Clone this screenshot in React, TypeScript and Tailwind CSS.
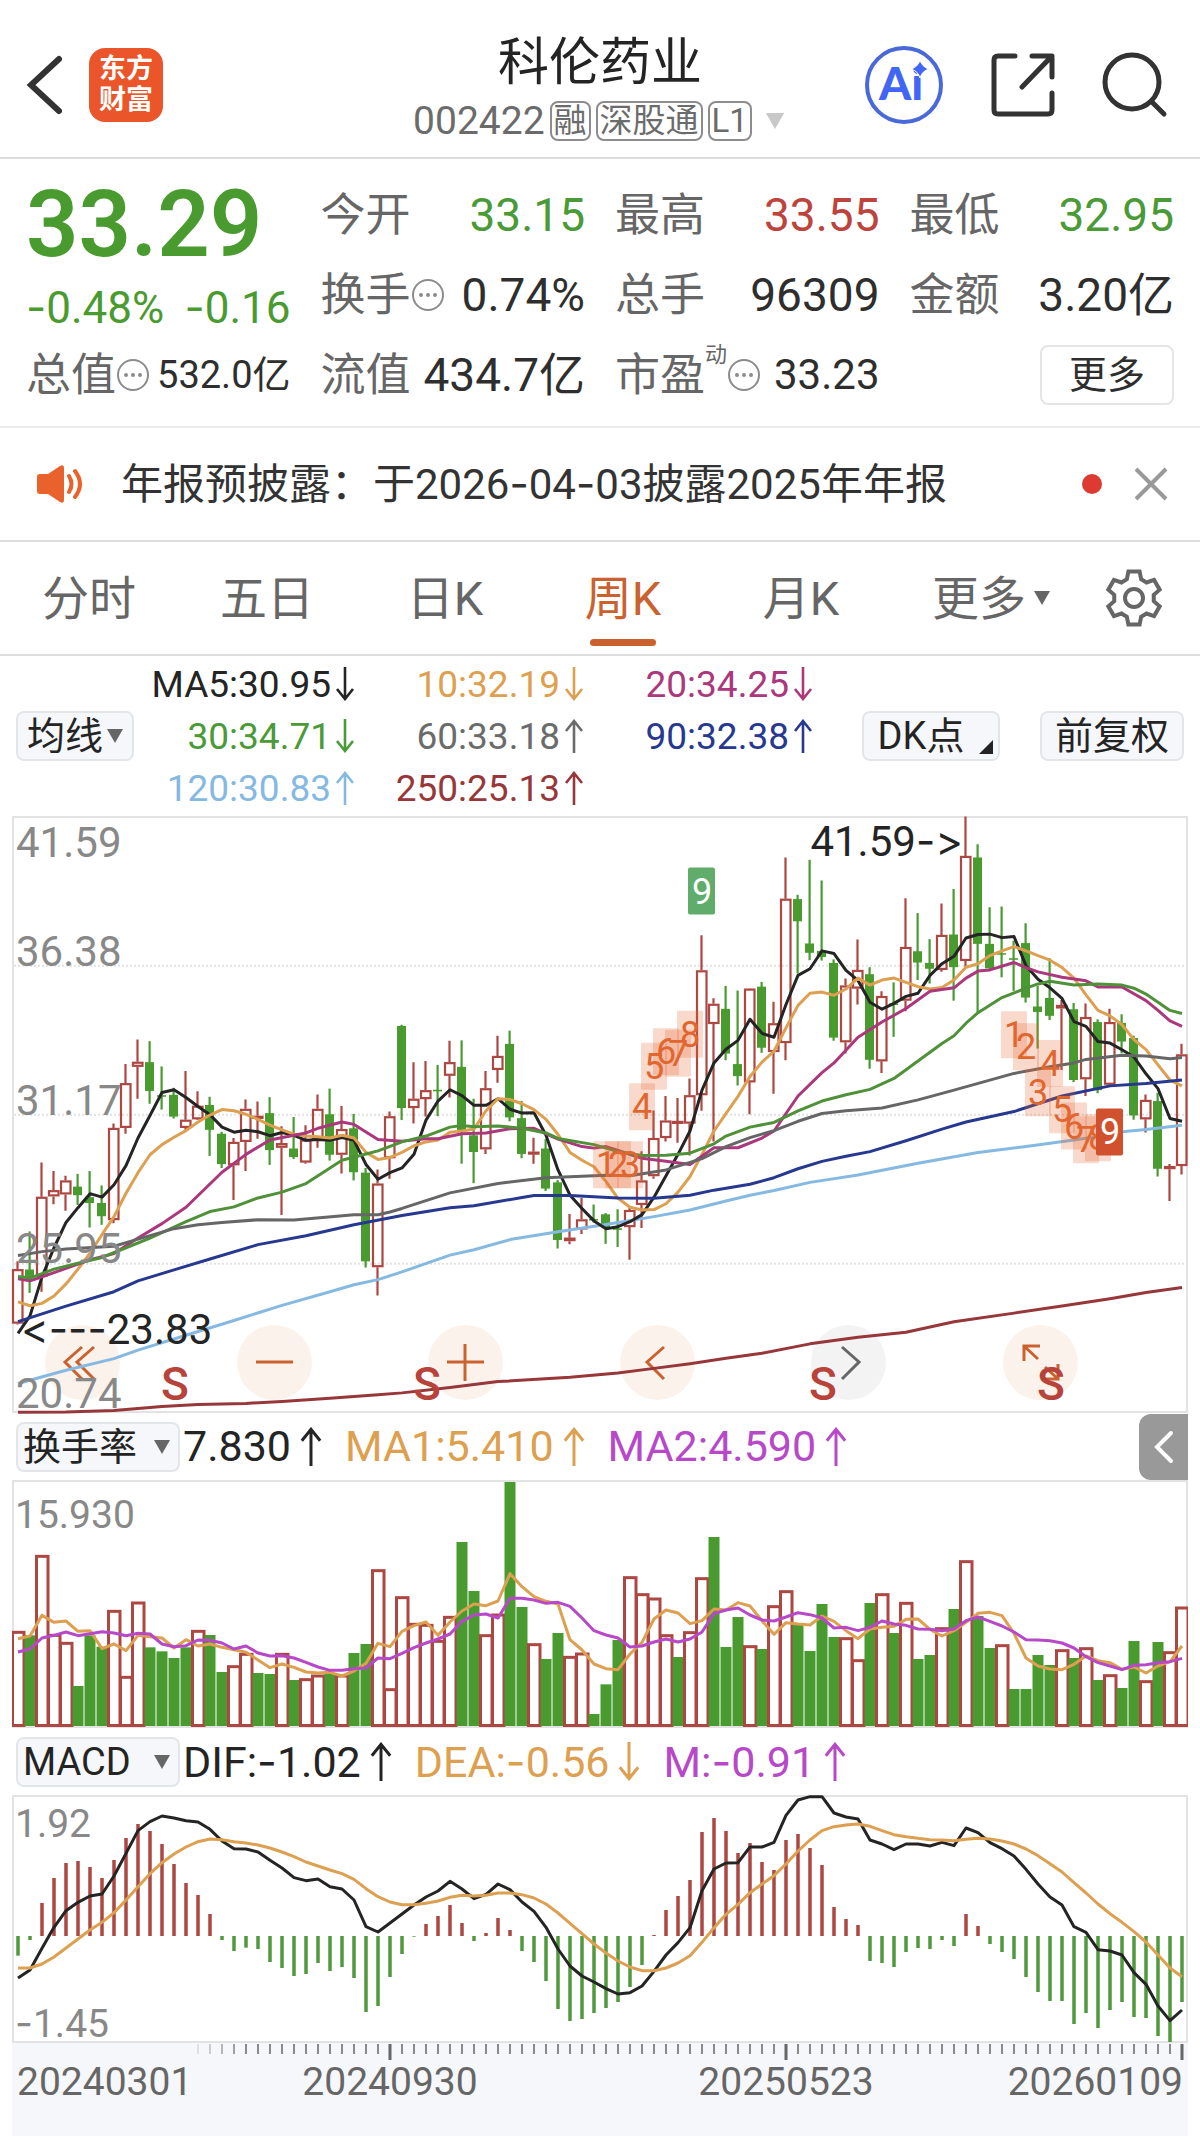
import type { ReactNode } from "react";

type Candle = [dir: "r" | "g", high: number, top: number, bottom: number, low: number];
type Point = [index: number, value: number];

const RED = "#ad4742";
const GREEN = "#499b30";
const AMBER = "#dd9f50";
const PURPLE = "#b748c8";
const INK = "#242424";

// one slot per week, 12 units wide
const slotX = (i: number) => 6 + i * 12;
const priceY = (v: number) => v / 2.57 - 6;
const volumeY = (v: number) => v / 3 - 80;
const macdY = (v: number) => v / 3 - 25;

const CANDLES: Candle[] = [
  ["r", 1160, 1180, 1320, 1322], ["g", 1083, 1181, 1203, 1241], ["r", 906, 994, 1200, 1238],
  ["r", 928, 977, 993, 1013], ["r", 940, 952, 988, 1030], ["g", 935, 968, 990, 1015],
  ["g", 928, 995, 1010, 1073], ["g", 965, 1010, 1044, 1066], ["r", 806, 817, 1054, 1062],
  ["r", 653, 702, 817, 832], ["r", 590, 647, 660, 742], ["g", 594, 648, 722, 755],
  ["g", 659, 733, 737, 770], ["g", 714, 732, 788, 793], ["r", 671, 796, 817, 822],
  ["r", 723, 760, 795, 797], ["g", 737, 758, 822, 889], ["g", 827, 832, 910, 920],
  ["r", 843, 853, 913, 1002], ["r", 744, 768, 853, 928], ["r", 749, 786, 790, 845],
  ["g", 738, 779, 874, 912], ["r", 813, 856, 868, 1041], ["g", 789, 870, 892, 897],
  ["r", 810, 847, 906, 909], ["r", 731, 768, 847, 868], ["g", 716, 782, 886, 901],
  ["r", 761, 820, 886, 934], ["g", 781, 818, 931, 952], ["g", 920, 932, 1160, 1176],
  ["r", 924, 960, 1175, 1248], ["r", 775, 787, 895, 948], ["g", 552, 555, 766, 797],
  ["r", 648, 742, 766, 806], ["r", 645, 720, 743, 788], ["g", 655, 719, 723, 787],
  ["r", 593, 648, 683, 739], ["g", 592, 660, 823, 909], ["g", 742, 836, 879, 959],
  ["r", 671, 715, 872, 884], ["r", 580, 632, 668, 701], ["g", 567, 601, 790, 800],
  ["g", 748, 792, 884, 895], ["r", 842, 878, 885, 909], ["g", 846, 870, 973, 979],
  ["g", 951, 957, 1105, 1127], ["r", 1038, 1099, 1108, 1116], ["r", 997, 1052, 1078, 1090],
  ["g", 1014, 1051, 1055, 1060], ["g", 1036, 1039, 1072, 1115], ["g", 1026, 1075, 1079, 1123],
  ["r", 1020, 1028, 1072, 1156], ["r", 877, 952, 1015, 1074], ["r", 772, 843, 941, 948],
  ["r", 735, 798, 843, 852], ["r", 740, 799, 804, 855], ["r", 690, 733, 806, 888],
  ["r", 322, 412, 733, 773], ["r", 484, 498, 550, 852], ["g", 452, 511, 626, 643],
  ["g", 464, 653, 684, 708], ["r", 458, 459, 700, 782], ["g", 442, 454, 611, 624],
  ["r", 493, 548, 622, 729], ["r", 122, 228, 599, 643], ["g", 218, 229, 286, 420],
  ["g", 128, 343, 367, 386], ["g", 181, 362, 378, 387], ["g", 384, 393, 585, 593],
  ["r", 433, 451, 597, 626], ["r", 333, 411, 459, 500], ["g", 404, 422, 642, 665],
  ["r", 466, 478, 646, 676], ["g", 443, 497, 501, 583], ["r", 227, 352, 490, 517],
  ["g", 265, 363, 392, 437], ["g", 332, 393, 408, 446], ["r", 240, 321, 411, 416],
  ["g", 203, 320, 404, 490], ["r", 17, 118, 388, 405], ["g", 88, 122, 344, 520],
  ["g", 250, 344, 407, 412], ["g", 248, 368, 371, 430], ["g", 336, 381, 385, 465],
  ["g", 291, 342, 482, 495], ["g", 452, 505, 519, 613], ["g", 381, 483, 529, 540],
  ["r", 488, 501, 510, 668], ["g", 496, 512, 694, 699], ["r", 497, 532, 692, 735],
  ["g", 538, 545, 720, 728], ["r", 511, 545, 706, 710], ["g", 525, 547, 595, 625],
  ["g", 580, 586, 785, 796], ["r", 731, 745, 795, 829], ["g", 727, 748, 922, 942],
  ["r", 910, 915, 923, 1005], ["r", 601, 628, 915, 937],
];

const MA5 = [
  1345, 1300, 1200, 1125, 1060, 1022, 986, 995, 963, 914, 843, 785, 726, 719, 739, 762, 783, 815, 828, 823,
  827, 837, 829, 836, 849, 847, 849, 842, 849, 911, 949, 932, 920, 885, 797, 748, 719, 734, 759, 759, 742,
  769, 779, 778, 836, 925, 990, 1024, 1056, 1076, 1071, 1058, 1040, 995, 940, 885, 825, 720, 650, 615, 592,
  538, 574, 584, 500, 425, 408, 362, 369, 412, 438, 494, 512, 497, 479, 471, 425, 395, 376, 329, 320, 319,
  328, 325, 400, 435, 457, 484, 544, 556, 595, 599, 616, 635, 678, 716, 793, 800,
];

const MA10 = [
  1264, 1274, 1268, 1249, 1218, 1180, 1139, 1091, 1045, 985, 932, 886, 860, 841, 824, 802, 784, 770, 773,
  782, 795, 810, 822, 833, 838, 840, 843, 836, 843, 880, 898, 893, 880, 863, 853, 848, 828, 825, 820, 773,
  742, 744, 755, 770, 795, 834, 880, 900, 917, 955, 998, 1021, 1028, 1027, 1012, 982, 942, 885, 825, 780,
  736, 685, 648, 620, 560, 502, 471, 468, 476, 460, 432, 450, 437, 432, 443, 454, 460, 456, 437, 404, 395,
  374, 362, 351, 362, 374, 386, 405, 432, 475, 515, 529, 552, 590, 616, 655, 694, 709,
];

const MA20: Point[] = [
  [0, 1205], [1, 1210], [2, 1200], [4, 1178], [6, 1156], [8, 1140], [10, 1100], [12, 1063], [14, 1021],
  [17, 931], [19, 885], [21, 848], [23, 836], [24, 830], [25, 818], [27, 802], [28, 808], [30, 847],
  [32, 851], [34, 845], [35, 845], [37, 832], [39, 830], [41, 819], [43, 818], [45, 846], [47, 865],
  [48, 869], [49, 865], [50, 875], [52, 895], [54, 903], [56, 911], [58, 868], [60, 868], [62, 843],
  [63, 825], [65, 735], [67, 675], [68, 650], [70, 584], [72, 545], [74, 510], [76, 466], [78, 457],
  [79, 432], [80, 414], [81, 411], [83, 392], [84, 405], [85, 416], [87, 430], [89, 439], [90, 455],
  [92, 455], [94, 490], [95, 515], [96, 542], [97, 556],
];

const MA30: Point[] = [
  [0, 1199], [1, 1203], [3, 1180], [5, 1165], [7, 1150], [9, 1125], [11, 1100], [14, 1058], [16, 1032],
  [18, 1020], [20, 997], [22, 982], [24, 960], [26, 920], [27, 900], [29, 884], [30, 876], [32, 853],
  [34, 838], [36, 815], [37, 811], [38, 814], [40, 812], [42, 818], [44, 830], [45, 844], [48, 860],
  [50, 878], [52, 888], [54, 887], [56, 882], [58, 858], [59, 838], [61, 815], [63, 803], [65, 773],
  [67, 748], [69, 732], [71, 718], [73, 690], [75, 645], [77, 600], [78, 580], [79, 548], [80, 521],
  [82, 482], [84, 458], [85, 447], [86, 440], [88, 450], [90, 447], [92, 450], [93, 458], [94, 473],
  [96, 515], [97, 523],
];

const MA60: Point[] = [
  [0, 1145], [2, 1135], [4, 1128], [8, 1121], [10, 1103], [13, 1076], [15, 1066], [17, 1060], [20, 1053],
  [23, 1054], [28, 1040], [30, 1040], [31, 1033], [32, 1024], [36, 984], [40, 960], [44, 945], [49, 939],
  [51, 940], [54, 925], [57, 896], [59, 865], [61, 842], [63, 824], [65, 800], [67, 780], [69, 773],
  [72, 766], [75, 745], [78, 720], [83, 677], [86, 660], [88, 650], [89, 641], [92, 630], [94, 632],
  [96, 639], [97, 636],
];

const MA90: Point[] = [
  [0, 1315], [4, 1275], [8, 1238], [10, 1210], [13, 1182], [16, 1154], [20, 1117], [24, 1094], [28, 1066],
  [32, 1042], [36, 1022], [38, 1017], [42, 996], [43, 991], [46, 991], [50, 997], [53, 998], [56, 990],
  [58, 977], [61, 962], [63, 945], [65, 922], [67, 903], [69, 890], [71, 878], [74, 850], [77, 820],
  [79, 802], [83, 775], [87, 735], [91, 709], [94, 703], [97, 694],
];

const MA120: Point[] = [
  [0, 1474], [4, 1440], [8, 1410], [10, 1388], [14, 1350], [18, 1312], [22, 1273], [26, 1238], [28, 1220],
  [30, 1207], [32, 1187], [36, 1144], [38, 1130], [41, 1104], [45, 1084], [49, 1065], [53, 1045],
  [56, 1028], [59, 1005], [61, 990], [63, 978], [66, 957], [70, 938], [75, 908], [80, 880], [84, 865],
  [88, 848], [90, 839], [92, 827], [94, 821], [97, 810],
];

const MA250: Point[] = [
  [0, 1548], [4, 1547], [8, 1543], [12, 1533], [15, 1528], [19, 1525], [22, 1520], [26, 1512], [30, 1503],
  [32, 1498], [36, 1484], [40, 1469], [46, 1458], [50, 1447], [53, 1435], [56, 1423], [59, 1409],
  [62, 1396], [66, 1372], [70, 1355], [74, 1342], [78, 1315], [83, 1293], [87, 1275], [91, 1256],
  [94, 1240], [97, 1227],
];

const VOLUME =
  "r697 g706 r469 r706 r730 g858 g706 g740 r634 r832 r609 g742 g754 g774 g742 r694 g705 g816 r800 r763 g819 g822 r763 g840 r839 r828 g822 r828 g759 g732 r512 r869 r593 r673 r676 r724 r652 g426 g573 r707 r645 g246 g621 r734 g777 g699 r772 r762 g942 g853 g720 r533 r584 r597 r707 g771 r698 r536 g411 g741 g651 r740 g747 r620 r575 g675 g753 g612 g711 r716 r782 g609 r584 g699 r610 g777 g765 r686 g627 r485 g648 g744 r737 g867 g867 g765 g795 r752 g774 r746 g840 r827 g864 g723 r845 g726 r758 r624"
    .split(" ")
    .map((s) => ({ up: s[0] === "r", top: Number(s.slice(1)) }));

const VOL_MA1 = [
  716, 708, 646, 667, 663, 694, 692, 746, 732, 752, 706, 710, 714, 744, 719, 738, 732, 742, 749, 757, 780,
  803, 792, 802, 816, 819, 817, 828, 813, 790, 730, 740, 694, 677, 666, 706, 666, 633, 612, 617, 603, 521,
  560, 590, 604, 612, 719, 750, 792, 806, 809, 762, 727, 657, 630, 639, 671, 662, 627, 630, 608, 618, 662,
  703, 668, 672, 675, 648, 664, 692, 716, 687, 682, 679, 658, 657, 688, 708, 692, 667, 640, 637, 647, 700,
  774, 798, 807, 809, 793, 768, 782, 788, 808, 801, 819, 798, 785, 738,
];

const VOL_MA2 = [
  756, 747, 714, 706, 696, 707, 701, 695, 699, 707, 700, 702, 732, 740, 737, 720, 721, 729, 747, 738, 759,
  768, 767, 774, 787, 801, 811, 811, 806, 804, 774, 776, 760, 743, 729, 717, 702, 664, 645, 642, 654, 595,
  595, 600, 610, 607, 619, 654, 692, 705, 714, 741, 738, 726, 717, 726, 717, 696, 641, 630, 624, 645, 660,
  663, 651, 638, 644, 654, 684, 682, 692, 682, 663, 672, 676, 687, 688, 692, 687, 662, 651, 664, 678, 696,
  719, 720, 722, 729, 744, 770, 788, 798, 809, 796, 794, 788, 785, 775,
];

const MACD_ZERO = 498;
const MACD_BARS = [
  557, 510, 399, 324, 279, 273, 291, 324, 270, 204, 162, 183, 222, 282, 339, 375, 432, 510, 543, 533, 537,
  576, 594, 618, 612, 579, 603, 591, 624, 726, 708, 621, 552, 500, 462, 438, 405, 459, 513, 489, 444, 480,
  543, 576, 633, 717, 753, 747, 729, 714, 696, 651, 585, 495, 420, 378, 330, 186, 144, 183, 249, 219, 276,
  300, 210, 192, 234, 285, 411, 447, 465, 573, 579, 591, 546, 534, 537, 510, 528, 432, 468, 522, 546, 567,
  621, 666, 693, 693, 762, 729, 774, 720, 696, 741, 744, 798, 816, 696,
];

const DIF = [
  624, 600, 535, 472, 422, 397, 378, 372, 318, 250, 182, 155, 138, 144, 152, 156, 178, 213, 236, 237, 246,
  271, 294, 323, 332, 327, 350, 357, 390, 470, 486, 459, 432, 405, 381, 363, 334, 357, 386, 373, 342, 359,
  396, 424, 472, 537, 588, 618, 636, 656, 672, 668, 648, 604, 555, 518, 473, 362, 297, 279, 278, 231, 231,
  217, 136, 90, 80, 80, 129, 141, 147, 210, 222, 239, 222, 222, 228, 217, 227, 174, 188, 218, 236, 258,
  298, 342, 381, 405, 470, 487, 539, 543, 555, 608, 643, 708, 752, 720,
];

const DEA = [
  594, 594, 582, 561, 534, 507, 480, 457, 428, 390, 350, 311, 278, 252, 231, 215, 207, 209, 215, 219, 225,
  234, 246, 260, 276, 288, 300, 311, 328, 356, 380, 396, 404, 404, 400, 393, 382, 376, 378, 376, 369, 369,
  374, 384, 402, 429, 460, 491, 522, 549, 573, 591, 602, 602, 594, 579, 557, 517, 473, 433, 403, 368, 342,
  317, 282, 243, 210, 182, 170, 165, 162, 169, 182, 194, 200, 205, 209, 210, 212, 208, 205, 207, 213, 222,
  237, 257, 281, 306, 338, 369, 402, 431, 457, 485, 516, 555, 594, 620,
];

// nine-turn sequence marks: [slot, top, digit]
const SEQUENCE: [number, number, number][] = [
  [49, 851, 1], [50, 851, 2], [51, 851, 3], [52, 702, 4], [53, 598, 5], [54, 561, 6], [55, 565, 7],
  [56, 516, 8], [83, 517, 1], [84, 548, 2], [85, 666, 3], [86, 591, 4], [87, 710, 5], [88, 752, 6],
  [89, 787, 7], [90, 782, 8],
];

const MA_LEGEND: { text: string; up: boolean; color: string }[] = [
  { text: "MA5:30.95", up: false, color: "text-[#242424]" },
  { text: "10:32.19", up: false, color: "text-[#dd9f50]" },
  { text: "20:34.25", up: false, color: "text-[#ab377c]" },
  { text: "30:34.71", up: false, color: "text-[#4a9a37]" },
  { text: "60:33.18", up: true, color: "text-[#6b6b6b]" },
  { text: "90:32.38", up: true, color: "text-[#26388f]" },
  { text: "120:30.83", up: true, color: "text-[#86b9e2]" },
  { text: "250:25.13", up: true, color: "text-[#98373a]" },
];

const TABS = ["分时", "五日", "日K", "周K", "月K"];

function toPoints(values: (number | Point)[], y: (v: number) => number) {
  return values
    .map((p, i) => (typeof p === "number" ? `${slotX(i)},${y(p)}` : `${slotX(p[0])},${y(p[1])}`))
    .join(" ");
}

function Line({ values, y, color }: { values: (number | Point)[]; y: (v: number) => number; color: string }) {
  return (
    <polyline points={toPoints(values, y)} fill="none" stroke={color} strokeWidth="3" strokeLinejoin="round" />
  );
}

// Roboto's hyphen is very short, Inter's reads as a proper minus next to digits
function Num({ children }: { children: string }) {
  return (
    <>
      {children.split("-").map((part, i) => (
        <span key={i}>
          {i > 0 && <span className="font-['Inter']">-</span>}
          {part}
        </span>
      ))}
    </>
  );
}

function Arrow({ up, className = "h-[34px] w-5" }: { up: boolean; className?: string }) {
  return (
    <svg viewBox="0 0 20 34" className={`shrink-0 ${className}`} fill="none" stroke="currentColor" strokeWidth="2.6">
      {up ? <path d="M10 34V2M2 12l8-10 8 10" /> : <path d="M10 0v32M2 22l8 10 8-10" />}
    </svg>
  );
}

function Caret({ className }: { className: string }) {
  return (
    <svg viewBox="0 0 16 14" className={className} fill="currentColor">
      <path d="M0 0h16L8 14z" />
    </svg>
  );
}

function InfoDots() {
  return (
    <button aria-label="说明" className="shrink-0 text-[#8c8c8c]">
      <svg viewBox="0 0 34 34" className="h-[34px] w-[34px]" fill="currentColor">
        <circle cx="17" cy="17" r="15" fill="none" stroke="currentColor" strokeWidth="2" />
        <circle cx="10" cy="17" r="2" />
        <circle cx="17" cy="17" r="2" />
        <circle cx="24" cy="17" r="2" />
      </svg>
    </button>
  );
}

function Quote({ label, value, color = "text-[#2e2e2e]", size = "text-[46px]", sup, info }: {
  label: string;
  value: string;
  color?: string;
  size?: string;
  sup?: string;
  info?: boolean;
}) {
  return (
    <div className="flex items-center justify-between">
      <span className="flex items-center text-[45px] leading-none text-[#666]">
        {label}
        {sup && <sup className="-top-5 text-[22px] leading-none">{sup}</sup>}
        {info && <InfoDots />}
      </span>
      <span className={`leading-none ${size} ${color}`}>{value}</span>
    </div>
  );
}

function GearIcon() {
  const pts: string[] = [];
  for (let k = 0; k < 6; k++) {
    for (const [r, a] of [[20, -21], [27, -12], [27, 12], [20, 21]]) {
      const t = ((k * 60 + a - 90) * Math.PI) / 180;
      pts.push(`${30 + r * Math.cos(t)},${30 + r * Math.sin(t)}`);
    }
  }
  return (
    <svg viewBox="0 0 60 60" className="h-[60px] w-[60px]" fill="none" stroke="currentColor" strokeWidth="4">
      <polygon points={pts.join(" ")} />
      <circle cx="30" cy="30" r="9" />
    </svg>
  );
}

function Header() {
  return (
    <header className="grid h-[159px] grid-cols-[1fr_auto_1fr] items-center border-b-2 border-[#dcdcdc] pt-3">
      <div className="flex items-center gap-6 pl-6">
        <button aria-label="返回" className="text-[#333]">
          <svg viewBox="0 0 41 62" className="h-[62px] w-[41px]" fill="none" stroke="currentColor" strokeWidth="6">
            <path d="M35 5L7 31l28 26" strokeLinecap="round" />
          </svg>
        </button>
        <a
          href="#home"
          className="flex h-[74px] w-[74px] flex-col items-center justify-center rounded-2xl bg-[#ea5529] text-[27px] font-bold leading-[31px] text-white"
        >
          <span>东方</span>
          <span>财富</span>
        </a>
      </div>
      <div className="flex flex-col items-center gap-1">
        <h1 className="pt-1 text-[51px] leading-[60px] text-[#242424]">科伦药业</h1>
        <div className="flex items-center gap-[5px] pt-1 text-[#6b6b6b]">
          <span className="text-[39px] leading-10">002422</span>
          {["融", "深股通", "L1"].map((tag) => (
            <span key={tag} className="rounded-lg border-2 border-[#8c8c8c] px-[2px] text-[33px] leading-[36px]">
              {tag}
            </span>
          ))}
          <Caret className="ml-[6px] h-4 w-6 text-[#c8c8c8]" />
        </div>
      </div>
      <div className="flex items-center justify-end gap-[47px] pr-8">
        <button aria-label="Ai">
          <svg viewBox="0 0 80 80" className="h-20 w-20">
            <circle cx="40" cy="40" r="37" fill="none" stroke="#4969d8" strokeWidth="4" />
            <text x="15" y="55" fontSize="46" fill="#4166f5" className="font-['Lato'] font-black">
              Ai
            </text>
            <path d="M56 15q2 7 9 9q-7 2-9 9q-2-7-9-9q7-2 9-9z" fill="#4166f5" stroke="#fff" strokeWidth="1" />
          </svg>
        </button>
        <button aria-label="分享" className="text-[#333]">
          <svg viewBox="0 0 64 64" className="h-16 w-16" fill="none" stroke="currentColor" strokeWidth="5" strokeLinecap="round" strokeLinejoin="round">
            <path d="M24 3H7q-4 0-4 4v50q0 4 4 4h50q4 0 4-4V40M41 3h20v21M60 4L31 34" />
          </svg>
        </button>
        <button aria-label="搜索" className="text-[#333]">
          <svg viewBox="0 0 66 66" className="h-[66px] w-[66px]" fill="none" stroke="currentColor" strokeWidth="5" strokeLinecap="round">
            <circle cx="30" cy="30" r="27" />
            <path d="M50 50l12 12" />
          </svg>
        </button>
      </div>
    </header>
  );
}

function QuotePanel() {
  return (
    <section className="grid grid-cols-4 grid-rows-[80px_80px_80px] gap-x-[30px] border-b-2 border-[#ececec] px-[26px] pt-4 pb-[11px]">
      <div className="row-span-2 text-[#499b30]">
        <div className="text-[92px] font-semibold leading-[100px]">33.29</div>
        <div className="flex justify-between text-[44px] leading-[64px]">
          <span><Num>-0.48%</Num></span>
          <span><Num>-0.16</Num></span>
        </div>
      </div>
      <Quote label="今开" value="33.15" color="text-[#4a9a37]" />
      <Quote label="最高" value="33.55" color="text-[#bd443d]" />
      <Quote label="最低" value="32.95" color="text-[#4a9a37]" />
      <Quote label="换手" value="0.74%" info />
      <Quote label="总手" value="96309" />
      <Quote label="金额" value="3.20亿" />
      <Quote label="总值" value="532.0亿" size="text-[38px]" info />
      <Quote label="流值" value="434.7亿" />
      <Quote label="市盈" value="33.23" size="text-[42px]" sup="动" info />
      <div className="flex items-center justify-end">
        <button className="h-[60px] w-[134px] rounded-lg border-2 border-[#e4e5e7] text-[38px] leading-none text-[#2e2e2e]">
          更多
        </button>
      </div>
    </section>
  );
}

function Notice() {
  return (
    <section className="flex h-[114px] items-center border-b-2 border-[#dcdcdc] pr-8 pl-9">
      <svg viewBox="0 0 50 40" className="h-10 w-[50px] text-[#ea622b]" fill="currentColor">
        <path d="M1 13q0-3 3-3h8L24 2q4-2 4 2v32q0 4-4 2L12 30H4q-3 0-3-3z" />
        <path d="M33 12q5 8 0 16M39 7q10 13 0 26" fill="none" stroke="currentColor" strokeWidth="4" strokeLinecap="round" />
      </svg>
      <p className="ml-[35px] flex-1 text-[42px] leading-none text-[#333]">
        <Num>年报预披露：于2026-04-03披露2025年年报</Num>
      </p>
      <span className="h-5 w-5 rounded-full bg-[#dd3b32]" />
      <button aria-label="关闭" className="ml-8 text-[#999]">
        <svg viewBox="0 0 34 34" className="h-[34px] w-[34px]" fill="none" stroke="currentColor" strokeWidth="4">
          <path d="M2 2l30 30M32 2L2 32" />
        </svg>
      </button>
    </section>
  );
}

function PeriodTabs() {
  return (
    <nav className="flex h-[114px] border-b-2 border-[#dcdcdc] text-[47px] leading-none text-[#666]">
      {TABS.map((tab) => (
        <button key={tab} className={`relative flex-1 ${tab === "周K" ? "text-[#c9622f]" : ""}`}>
          {tab}
          {tab === "周K" && (
            <span className="absolute bottom-2 left-1/2 h-[7px] w-[66px] -translate-x-1/2 rounded-full bg-[#c9622f]" />
          )}
        </button>
      ))}
      <button className="flex-1">
        <span className="relative">
          更多
          <Caret className="absolute top-1/2 left-full ml-2 h-[14px] w-4 -translate-y-1/2" />
        </span>
      </button>
      <button aria-label="设置" className="flex w-[132px] items-center justify-center">
        <GearIcon />
      </button>
    </nav>
  );
}

function MaLegend() {
  return (
    <section className="mx-3 flex h-40 items-center">
      <button className="ml-1 flex h-[50px] w-[118px] items-center justify-center gap-1 rounded-lg border-2 border-[#e3e6e9] bg-[#f6f7fa] text-[38px] leading-none text-[#242424]">
        均线
        <Caret className="h-[14px] w-4 text-[#666]" />
      </button>
      <div className="-ml-2 grid grid-cols-[229px_229px_229px]">
        {MA_LEGEND.map(({ text, up, color }) => (
          <div key={text} className={`flex h-[52px] items-center justify-end gap-1 text-[37px] leading-none ${color}`}>
            {text}
            <Arrow up={up} />
          </div>
        ))}
      </div>
      <div className="mr-1 ml-auto flex gap-10">
        <button className="relative h-[50px] w-[138px] rounded-lg border-2 border-[#e3e6e9] bg-[#f6f7fa] pr-5 text-[38px] leading-none text-[#242424]">
          DK点
          <svg viewBox="0 0 14 14" className="absolute right-[5px] bottom-[5px] h-[14px] w-[14px]">
            <path d="M14 0v14H0z" fill="#242424" />
          </svg>
        </button>
        <button className="h-[50px] w-36 rounded-lg border-2 border-[#e3e6e9] bg-[#f6f7fa] text-[38px] leading-none text-[#242424]">
          前复权
        </button>
      </div>
    </section>
  );
}

function Frame({ height }: { height: number }) {
  return <rect x="1" y="1" width="1174" height={height - 2} fill="none" stroke="#e3e3e3" strokeWidth="2" />;
}

function CandleStick({ candle, index }: { candle: Candle; index: number }) {
  const [dir, high, top, bottom, low] = candle;
  const x = slotX(index) - 0.5;
  const y = priceY(top);
  const h = Math.max(priceY(bottom) - y, 1.5);
  if (dir === "g") {
    return (
      <g fill={GREEN}>
        <rect x={x - 1} y={priceY(high)} width="2.2" height={priceY(low) - priceY(high)} />
        <rect x={x - 4.5} y={y} width="9" height={h} />
      </g>
    );
  }
  return (
    <g fill="none" stroke={RED} strokeWidth="2.2">
      <path d={`M${x} ${priceY(high)}V${y}M${x} ${y + h}V${priceY(low)}`} />
      <rect x={x - 4.5} y={y + 1} width="9.5" height={Math.max(h - 2, 1)} />
    </g>
  );
}

function ChartButton({ label, muted, children }: { label: string; muted?: boolean; children: ReactNode }) {
  return (
    <button
      aria-label={label}
      className={`h-[75px] w-[75px] rounded-full ${muted ? "bg-[#f3f3f3] text-[#666]" : "bg-[#fcf2ec] text-[#c9622f]"}`}
    >
      <svg viewBox="0 0 75 75" fill="none" stroke="currentColor" strokeWidth="3">
        {children}
      </svg>
    </button>
  );
}

function PriceChart() {
  return (
    <section className="relative mx-3">
      <div className="absolute right-[110px] bottom-[13px] left-[33px] flex justify-between">
        <ChartButton label="最早">
          <path d="M37 22L20 37l17 17M49 22L32 37l17 17" />
        </ChartButton>
        <ChartButton label="缩小">
          <path d="M19 37h37" />
        </ChartButton>
        <ChartButton label="放大">
          <path d="M19 37h37M37 19v37" />
        </ChartButton>
        <ChartButton label="左移">
          <path d="M44 22L27 37l17 17" />
        </ChartButton>
        <ChartButton label="右移" muted>
          <path d="M31 22l17 15-17 17" />
        </ChartButton>
        <ChartButton label="全屏">
          <path d="M21 36V21h16M22 22l13 12M55 39v15H40M54 53L42 42" />
        </ChartButton>
      </div>
      <svg
        viewBox="0 0 1176 597"
        className="pointer-events-none relative block h-auto w-full overflow-visible font-['Roboto'] [font-variant-ligatures:none]"
      >
        <Frame height={597} />
        {[400, 783, 1166].map((v) => (
          <path key={v} d={`M2 ${priceY(v)}H1174`} stroke="#e2e2e2" strokeWidth="2" strokeDasharray="2 2" />
        ))}
        {CANDLES.map((c, i) => (
          <CandleStick key={i} candle={c} index={i} />
        ))}
        <Line values={MA250} y={priceY} color="#98373a" />
        <Line values={MA120} y={priceY} color="#86b9e2" />
        <Line values={MA5} y={priceY} color={INK} />
        <Line values={MA10} y={priceY} color={AMBER} />
        <Line values={MA20} y={priceY} color="#ab377c" />
        <Line values={MA30} y={priceY} color="#4f9139" />
        <Line values={MA60} y={priceY} color="#666" />
        <Line values={MA90} y={priceY} color="#26388f" />

        {SEQUENCE.map(([slot, top, n]) => (
          <g key={slot} textAnchor="middle">
            <rect x={slotX(slot) - 13} y={priceY(top)} width="26" height="47" rx="1" fill="#e8682f" fillOpacity="0.25" />
            <text x={slotX(slot)} y={priceY(top) + 36} fontSize="36" fill="#e0662f">
              {n}
            </text>
          </g>
        ))}
        <g textAnchor="middle" fontSize="36" fill="#fff">
          <rect x={slotX(57) - 14} y={priceY(148)} width="27" height="47" rx="2" fill="#5fac6b" />
          <text x={slotX(57)} y={priceY(148) + 36}>9</text>
          <rect x={slotX(91) - 14} y={priceY(767)} width="27" height="47" rx="2" fill="#d1512e" />
          <text x={slotX(91)} y={priceY(767) + 36}>9</text>
        </g>

        <g fontSize="42" fill="#888">
          <text x="4" y="41">41.59</text>
          <text x="4" y="150">36.38</text>
          <text x="4" y="299">31.17</text>
          <text x="4" y="447">25.95</text>
          <text x="4" y="592">20.74</text>
        </g>
        <g fontSize="42" fill={INK}>
          <text x="951" y="40" textAnchor="end">
            41.59<tspan className="font-['Inter']">-&gt;</tspan>
          </text>
          <text x="9" y="528">
            <tspan className="font-['Inter']">&lt;---</tspan>23.83
          </text>
        </g>
        <g fontSize="46" fill="#b8433b" textAnchor="middle" className="font-['Roboto'] font-medium">
          <text x="163" y="584">S</text>
          <text x="415" y="584">S</text>
          <text x="811" y="584">S</text>
          <text x="1039" y="584">S</text>
        </g>
      </svg>
    </section>
  );
}

function IndicatorRow({ name, values, children }: {
  name: string;
  values: { text: string; up: boolean; color: string }[];
  children?: ReactNode;
}) {
  return (
    <div className="mx-3 flex h-[67px] items-center">
      <button className="ml-1 flex h-[50px] w-[164px] shrink-0 items-center justify-between rounded-lg border-2 border-[#e3e6e9] bg-[#f6f7fa] pr-2 pl-[5px] text-[38px] leading-none text-[#242424]">
        {name}
        <Caret className="h-[14px] w-4 text-[#666]" />
      </button>
      <div className="ml-[3px] flex gap-[22px]">
        {values.map(({ text, up, color }) => (
          <span key={text} className={`flex items-center gap-2 text-[43px] leading-none ${color}`}>
            <span><Num>{text}</Num></span>
            <Arrow up={up} className="h-[39px] w-6" />
          </span>
        ))}
      </div>
      {children}
    </div>
  );
}

function VolumeChart() {
  return (
    <svg viewBox="0 0 1176 248" className="mx-3 block h-auto w-[calc(100%-24px)] font-['Roboto']">
      <Frame height={248} />
      {VOLUME.map(({ up, top }, i) => {
        const y = volumeY(top);
        return up ? (
          <rect key={i} x={slotX(i) - 5.5} y={y} width="11.5" height={245.5 - y} fill="#fff" stroke={RED} strokeWidth="3" />
        ) : (
          <rect key={i} x={slotX(i) - 5.5} y={y} width="11" height={246 - y} fill={GREEN} />
        );
      })}
      <Line values={VOL_MA1} y={volumeY} color={AMBER} />
      <Line values={VOL_MA2} y={volumeY} color={PURPLE} />
      <text x="3" y="48" fontSize="39" fill="#888">15.930</text>
    </svg>
  );
}

function MacdChart() {
  const zero = macdY(MACD_ZERO);
  return (
    <svg viewBox="0 0 1176 248" className="mx-3 block h-auto w-[calc(100%-24px)] overflow-visible font-['Roboto']">
      <Frame height={248} />
      {MACD_BARS.map((v, i) => (
        <path key={i} d={`M${slotX(i)} ${zero}V${macdY(v)}`} stroke={v < MACD_ZERO ? RED : "#4f9a3c"} strokeWidth="3.5" />
      ))}
      <Line values={DIF} y={macdY} color={INK} />
      <Line values={DEA} y={macdY} color={AMBER} />
      <g fontSize="39" fill="#888">
        <text x="3" y="42">1.92</text>
        <text x="3" y="242">
          <tspan className="font-['Inter']">-</tspan>1.45
        </text>
      </g>
    </svg>
  );
}

function TimeAxis() {
  return (
    <svg viewBox="0 0 1176 93" className="mx-3 block h-auto w-[calc(100%-24px)] bg-[#f6f7fa] font-['Roboto']">
      {CANDLES.map((_, i) => {
        if (i < 15) return null;
        const major = i === 31 || i === 64 || i === 97;
        return (
          <path
            key={i}
            d={`M${slotX(i)} 1v${major ? 16 : 10}`}
            stroke={major ? "#666" : "#8a8a8a"}
            strokeWidth={major ? 3 : 2}
            opacity={Math.min(1, (i - 14) / 5)}
          />
        );
      })}
      <g fontSize="39" fill="#666">
        <text x="5" y="52">20240301</text>
        <text x={slotX(31)} y="52" textAnchor="middle">20240930</text>
        <text x={slotX(64)} y="52" textAnchor="middle">20250523</text>
        <text x="1171" y="52" textAnchor="end">20260109</text>
      </g>
    </svg>
  );
}

export default function App() {
  return (
    <main className="w-full bg-white font-['Roboto','Noto_Sans_CJK_SC',sans-serif]">
      <Header />
      <QuotePanel />
      <Notice />
      <PeriodTabs />
      <MaLegend />
      <PriceChart />
      <IndicatorRow
        name="换手率"
        values={[
          { text: "7.830", up: true, color: "text-[#242424]" },
          { text: "MA1:5.410", up: true, color: "text-[#dd9f50]" },
          { text: "MA2:4.590", up: true, color: "text-[#b748c8]" },
        ]}
      >
        <button aria-label="展开" className="ml-auto flex h-[66px] w-[49px] items-center justify-center rounded-l-xl bg-[#999]">
          <svg viewBox="0 0 20 34" className="h-[34px] w-5" fill="none" stroke="#fff" strokeWidth="4" strokeLinecap="round">
            <path d="M17 3L3 17l14 14" />
          </svg>
        </button>
      </IndicatorRow>
      <VolumeChart />
      <IndicatorRow
        name="MACD"
        values={[
          { text: "DIF:-1.02", up: true, color: "text-[#242424]" },
          { text: "DEA:-0.56", up: false, color: "text-[#dd9f50]" },
          { text: "M:-0.91", up: true, color: "text-[#b748c8]" },
        ]}
      />
      <MacdChart />
      <TimeAxis />
    </main>
  );
}
